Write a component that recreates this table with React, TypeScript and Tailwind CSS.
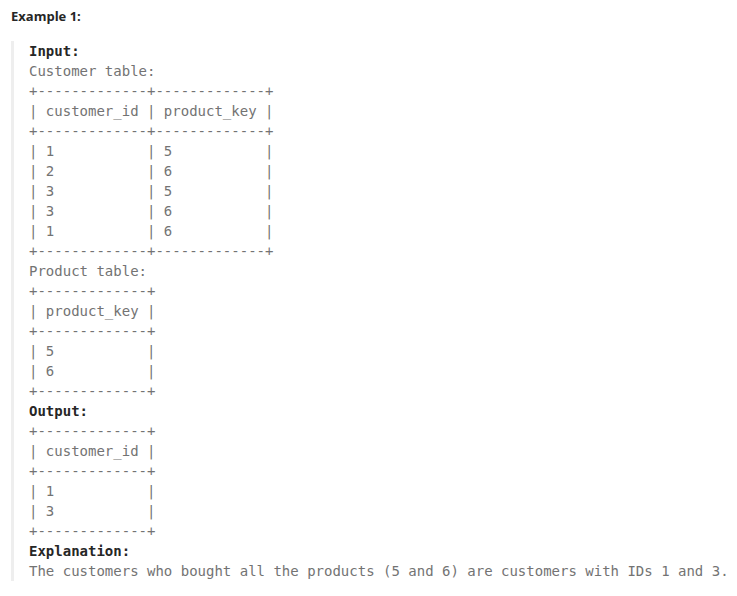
const lines: { text: string; bold?: boolean }[] = [
  { text: "Input:", bold: true },
  { text: "Customer table:" },
  { text: "+-------------+-------------+" },
  { text: "| customer_id | product_key |" },
  { text: "+-------------+-------------+" },
  { text: "| 1           | 5           |" },
  { text: "| 2           | 6           |" },
  { text: "| 3           | 5           |" },
  { text: "| 3           | 6           |" },
  { text: "| 1           | 6           |" },
  { text: "+-------------+-------------+" },
  { text: "Product table:" },
  { text: "+-------------+" },
  { text: "| product_key |" },
  { text: "+-------------+" },
  { text: "| 5           |" },
  { text: "| 6           |" },
  { text: "+-------------+" },
  { text: "Output:", bold: true },
  { text: "+-------------+" },
  { text: "| customer_id |" },
  { text: "+-------------+" },
  { text: "| 1           |" },
  { text: "| 3           |" },
  { text: "+-------------+" },
  { text: "Explanation:", bold: true },
  {
    text: "The customers who bought all the products (5 and 6) are customers with IDs 1 and 3.",
  },
];

export default function App() {
  return (
    <div className="h-[596px] w-[737px] bg-white pt-[6px] pl-[11px]">
      <p className="text-[13px] leading-[20px] font-bold text-[#262626] [font-family:'Open_Sans','Liberation_Sans',sans-serif]">
        Example 1:
      </p>
      <pre className="mt-[15px] border-l-[3px] border-[#eeeeee] pl-[15px] text-[14px] leading-[20px] text-[#737373] [font-family:'DejaVu_Sans_Mono',monospace]">
        {lines.map((l, i) => (
          <div key={i} className={l.bold ? "font-bold text-[#262626]" : ""}>
            {l.text}
          </div>
        ))}
      </pre>
    </div>
  );
}
